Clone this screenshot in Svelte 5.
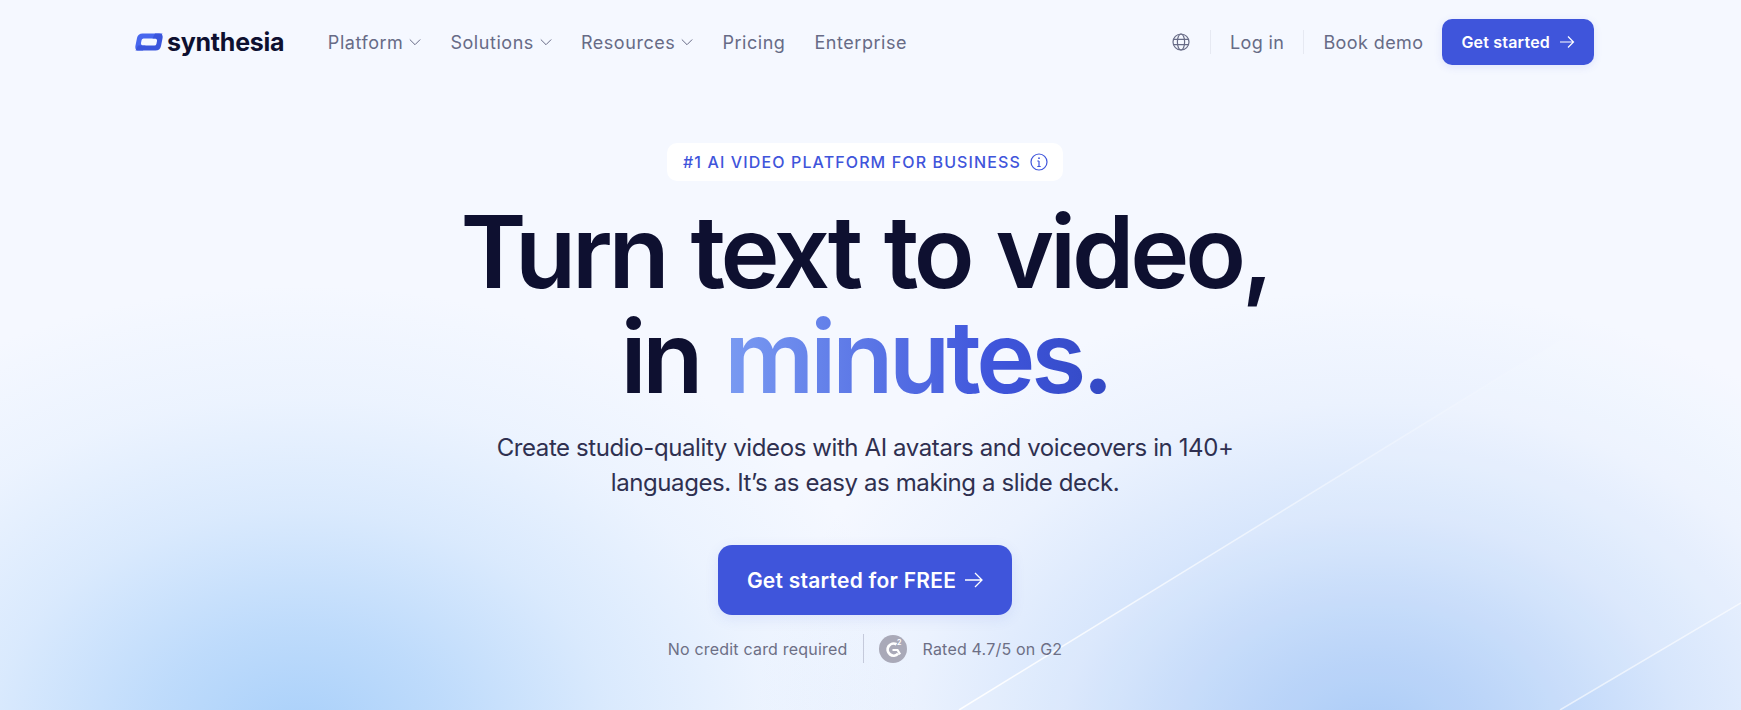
<script lang="ts">
	const menu = [
		{ label: 'Platform', caret: true },
		{ label: 'Solutions', caret: true },
		{ label: 'Resources', caret: true },
		{ label: 'Pricing', caret: false },
		{ label: 'Enterprise', caret: false }
	];
</script>

<div class="page">
	<!-- backdrop: soft glows and the thin diagonal light streaks -->
	<div class="glow"></div>
	<svg class="streaks" viewBox="0 0 1741 710" preserveAspectRatio="none" aria-hidden="true">
		<defs>
			<linearGradient id="streak" x1="959" y1="710" x2="1560" y2="340" gradientUnits="userSpaceOnUse">
				<stop offset="0" stop-color="#fff" stop-opacity="0.95" />
				<stop offset="0.55" stop-color="#fff" stop-opacity="0.5" />
				<stop offset="1" stop-color="#fff" stop-opacity="0" />
			</linearGradient>
		</defs>
		<polygon points="959,710 1560,340 1741,340 1741,603 1560,710" fill="#fff" opacity="0.1" />
		<line x1="959" y1="710" x2="1560" y2="340" stroke="url(#streak)" stroke-width="1.5" />
		<line x1="1560" y1="710" x2="1741" y2="603" stroke="#fff" stroke-opacity="0.6" stroke-width="1.5" />
	</svg>

	<header class="nav">
		<a class="logo" href="#top">
			<svg width="28" height="18" viewBox="0 0 28 18" aria-hidden="true">
				<path d="M7.500 .5H27.500L25 5.500H8.500Q7 5.500 6.600 7L6 10Q5.800 12 7.500 12.500H10.500L8 17.500H4Q-.5 17.500 .5 12.500L2 5Q3 .5 7.500 .5Z" fill="#4767ee" />
				<path d="M7.500 .5H27.500L25 5.500H8.500Q7 5.500 6.600 7L6 10Q5.800 12 7.500 12.500H10.500L8 17.500H4Q-.5 17.500 .5 12.500L2 5Q3 .5 7.500 .5Z" fill="#3a55dc" transform="rotate(180 14 9)" />
			</svg>
			<span>synthesia</span>
		</a>
		<nav class="menu">
			{#each menu as item}
				<a href="#top">
					{item.label}
					{#if item.caret}
						<svg width="12" height="12" viewBox="0 0 12 12" fill="none" stroke="currentColor" stroke-width="1" aria-hidden="true">
							<path d="M.8 3.500 6 8.700l5.200-5.200" />
						</svg>
					{/if}
				</a>
			{/each}
		</nav>
		<div class="actions">
			<svg class="globe" width="18" height="18" viewBox="0 0 18 18" fill="none" stroke="currentColor" stroke-width="1.2" aria-hidden="true">
				<circle cx="9" cy="9" r="8" />
				<ellipse cx="9" cy="9" rx="3.600" ry="8" />
				<path d="M1.500 6.300h15M1.500 11.700h15" />
			</svg>
			<span class="rule"></span>
			<a href="#top">Log in</a>
			<span class="rule"></span>
			<a href="#top">Book demo</a>
			<a class="btn small" href="#top">
				Get started
				<svg width="16" height="14" viewBox="0 0 16 14" fill="none" stroke="currentColor" stroke-width="1.200" aria-hidden="true">
					<path d="M1 7h13.500M9 1.500 14.500 7 9 12.500" />
				</svg>
			</a>
		</div>
	</header>

	<main class="hero">
		<div class="badge">
			<span>#1 AI VIDEO PLATFORM FOR BUSINESS</span>
			<svg width="18" height="18" viewBox="0 0 18 18" fill="none" stroke="currentColor" stroke-width="1.200" aria-hidden="true">
				<circle cx="9" cy="9" r="8" />
				<path d="M9 8v5.500M7.300 8H9M7.300 13.500h3.400" />
				<circle cx="9" cy="5.200" r="0.900" fill="currentColor" stroke="none" />
			</svg>
		</div>
		<h1>Turn text to video,<br />in <span class="accent">minutes.</span></h1>
		<p class="lead">Create studio-quality videos with AI avatars and voiceovers in 140+<br />languages. It’s as easy as making a slide deck.</p>
		<a class="btn large" href="#top">
			Get started for FREE
			<svg width="20" height="18" viewBox="0 0 20 18" fill="none" stroke="currentColor" stroke-width="1.300" aria-hidden="true">
				<path d="M1 9h17M11 2l7 7-7 7" />
			</svg>
		</a>
		<div class="note">
			<span>No credit card required</span>
			<span class="divider"></span>
			<span class="g2">
				<svg width="28" height="28" viewBox="0 0 28 28" aria-hidden="true">
					<circle cx="14" cy="14" r="14" fill="#a9a9b8" />
					<path d="M17.500 9.300a6 6 0 1 0 1.600 9.300" fill="none" stroke="#fff" stroke-width="2.800" />
					<path d="M13.500 15h5l2.600 4.400" fill="none" stroke="#fff" stroke-width="2.200" />
					<text x="18" y="10" font-size="7" font-weight="700" fill="#fff" font-family="Inter, sans-serif">2</text>
				</svg>
				Rated 4.7/5 on G2
			</span>
		</div>
	</main>
</div>

<style>
	:global(body) {
		margin: 0;
	}

	.page {
		position: relative;
		height: 710px;
		overflow: hidden;
		background: #f5f8ff;
		font-family: Inter, 'Liberation Sans', sans-serif;
		color: #676b86;
	}

	.glow {
		position: absolute;
		inset: 0;
		background:
			radial-gradient(ellipse 620px 450px at 300px 735px, #a9d0fa 0%, rgba(169, 208, 250, 0.72) 24%, rgba(169, 208, 250, 0.36) 50%, rgba(169, 208, 250, 0.12) 75%, rgba(169, 208, 250, 0) 100%),
			radial-gradient(ellipse 620px 450px at 1372px 740px, #a2c6f7 0%, rgba(162, 198, 247, 0.72) 24%, rgba(162, 198, 247, 0.36) 50%, rgba(162, 198, 247, 0.12) 75%, rgba(162, 198, 247, 0) 100%);
	}

	.streaks {
		position: absolute;
		inset: 0;
		width: 100%;
		height: 100%;
	}

	a {
		color: inherit;
		text-decoration: none;
	}

	.nav {
		position: relative;
		display: flex;
		align-items: center;
		padding: 19px 147px 0 135px;
		height: 46px;
		font-size: 18px;
		letter-spacing: 0.55px;
	}

	.logo {
		display: flex;
		align-items: center;
		gap: 4px;
		color: #0e1030;
		font-size: 25px;
		font-weight: 700;
		letter-spacing: -0.25px;
	}

	.menu {
		display: flex;
		gap: 29px;
		margin-left: 43.5px;
	}

	.menu a {
		display: flex;
		align-items: center;
		gap: 6px;
	}

	.actions {
		display: flex;
		align-items: center;
		margin-left: auto;
		letter-spacing: 0.4px;
	}

	.globe {
		margin-right: 1px;
	}

	.rule {
		width: 1px;
		height: 24px;
		margin: 0 19px;
		background: #e6e9f2;
	}

	.btn {
		display: flex;
		align-items: center;
		background: #3f55db;
		color: #fff;
		font-weight: 600;
	}

	.small {
		margin-left: 19px;
		height: 46px;
		padding: 0 19px;
		gap: 9px;
		border-radius: 10px;
		font-size: 16px;
		letter-spacing: 0.2px;
		box-shadow: 0 2px 8px rgba(63, 85, 219, 0.12);
	}

	.hero {
		position: relative;
		display: flex;
		flex-direction: column;
		align-items: center;
		padding: 78px 11px 0 0;
	}

	.badge {
		display: flex;
		align-items: center;
		gap: 9px;
		height: 38px;
		padding: 0 15px 0 16px;
		border-radius: 10px;
		background: #fff;
		color: #3f55db;
		font-size: 16px;
		font-weight: 500;
		letter-spacing: 1.12px;
	}

	h1 {
		margin: 18px 0 0;
		font-size: 100px;
		line-height: 105px;
		font-weight: 560;
		letter-spacing: -4.2px;
		word-spacing: 4px;
		text-align: center;
		color: #0e1030;
	}

	.accent {
		background: linear-gradient(90deg, #7a9bf2 0%, #3f55db 70%, #3349c4 100%);
		-webkit-background-clip: text;
		background-clip: text;
		color: transparent;
	}

	.lead {
		margin: 22px 0 0;
		font-size: 24px;
		line-height: 34.5px;
		letter-spacing: -0.4px;
		text-align: center;
		color: #2f3050;
	}

	.large {
		margin-top: 45px;
		height: 70px;
		padding: 0 28px 0 29px;
		gap: 8px;
		border-radius: 14px;
		font-size: 21px;
		letter-spacing: 0.25px;
		box-shadow: 0 4px 14px rgba(63, 85, 219, 0.1);
	}

	.note {
		display: flex;
		align-items: center;
		margin-top: 19px;
		font-size: 16px;
		letter-spacing: 0.2px;
		color: #6d6f85;
	}

	.divider {
		width: 1px;
		height: 29px;
		margin: 0 15px;
		background: #c5cadb;
	}

	.g2 {
		display: flex;
		align-items: center;
		gap: 16px;
	}
</style>
